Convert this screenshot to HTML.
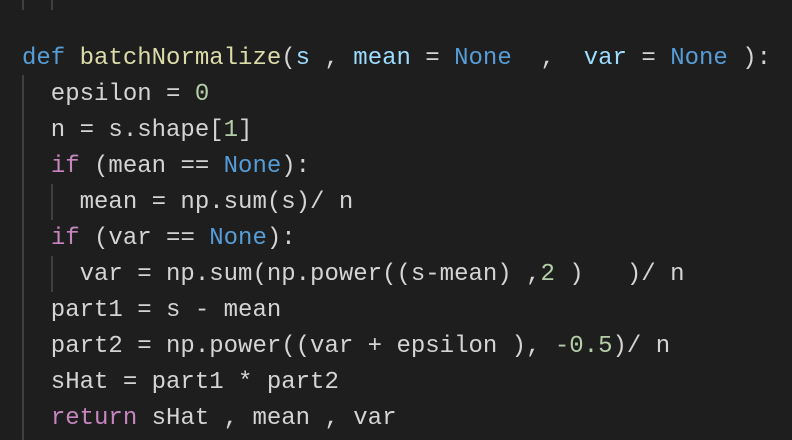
<!DOCTYPE html>
<html><head><style>
html,body{margin:0;padding:0;background:#1e1e1e;width:792px;height:440px;overflow:hidden;position:relative}
.c{position:absolute;left:22px;top:41px;font-family:"Liberation Mono","DejaVu Sans Mono",monospace;font-size:24px;letter-spacing:0;line-height:36px;color:#d4d4d4;white-space:pre}
.k{color:#569cd6}.f{color:#dcdcaa}.p{color:#9cdcfe}.n{color:#b5cea8}.m{color:#c586c0}
.g{position:absolute;width:2px;background:#404040}
</style></head><body>
<div class="g" style="left:22px;top:0;height:10px"></div>
<div class="g" style="left:51px;top:0;height:10px"></div>
<div class="g" style="left:22px;top:75px;height:365px"></div>
<div class="g" style="left:51px;top:184px;height:36px"></div>
<div class="g" style="left:51px;top:256px;height:36px"></div>
<div class="c"><span class="k">def</span> <span class="f">batchNormalize</span>(<span class="p">s</span> , <span class="p">mean</span> = <span class="k">None</span>  ,  <span class="p">var</span> = <span class="k">None</span> ):
  epsilon = <span class="n">0</span>
  n = s.shape[<span class="n">1</span>]
  <span class="m">if</span> (mean == <span class="k">None</span>):
    mean = np.sum(s)/ n
  <span class="m">if</span> (var == <span class="k">None</span>):
    var = np.sum(np.power((s-mean) ,<span class="n">2</span> )   )/ n
  part1 = s - mean
  part2 = np.power((var + epsilon ), <span class="n">-0.5</span>)/ n
  sHat = part1 * part2
  <span class="m">return</span> sHat , mean , var</div>
</body></html>
